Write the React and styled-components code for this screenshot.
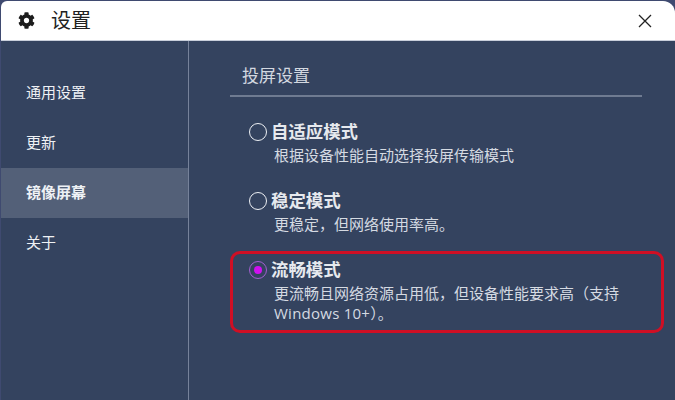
import React from "react";
import styled, { createGlobalStyle } from "styled-components";
import { FaCog } from "react-icons/fa";

const Global = createGlobalStyle`
  html, body { margin: 0; padding: 0; background: #34435f; }
  body { font-family: "Noto Sans CJK SC", "Noto Sans", sans-serif; }
`;
const Frame = styled.div`
  width: 675px; height: 400px; overflow: hidden; background: #3f4a70;
  padding: 1px 0 0 1px; box-sizing: border-box; display: flex; flex-direction: column;
`;
const TitleBar = styled.header`
  height: 40px; flex: none; background: #fff; display: flex; align-items: center;
  padding: 0 23px 0 17px; border-radius: 6px 12px 0 0; box-sizing: border-box;
  border-bottom: 1px solid #c9cfdb; color: #1c1c1c;
`;
const TitleText = styled.span`
  font-size: 20px; line-height: 26px; margin-left: 16px; flex: 1; color: #222;
  padding-bottom: 1px;
`;
const Close = styled.svg`width: 14px; height: 14px; flex: none;`;
const Body = styled.div`
  flex: 1; display: flex; background: #34435f; min-height: 0;
`;
const Sidebar = styled.nav`
  width: 188px; flex: none; box-sizing: border-box; padding-top: 27px;
  border-right: 1px solid #76829a; display: flex; flex-direction: column;
`;
const NavItem = styled.div`
  height: 50px; box-sizing: border-box; display: flex; align-items: center;
  padding: 0 0 3px 25px;
  font-size: 15px; color: #eef1f5;
  font-weight: ${p => (p.$active ? 700 : 400)};
  background: ${p => (p.$active ? "#536078" : "transparent")};
`;
const Main = styled.main`
  flex: 1; padding: 22px 0 0 41px; min-width: 0;
`;
const SectionHead = styled.div`
  width: 412px; box-sizing: border-box; padding: 0 0 8px 12px; margin-bottom: 16px;
  border-bottom: 2px solid #6f7b91; font-size: 17px; line-height: 24px; color: #d3d8e0;
`;
const Options = styled.div`
  display: flex; flex-direction: column; gap: 7px;
`;
const Option = styled.div`
  width: 434px; box-sizing: border-box; display: grid;
  grid-template-columns: 18px 1fr; column-gap: 4px;
  padding: 4px 10px 7px 16px;
  border: 3px solid ${p => (p.$marked ? "#cf0f24" : "transparent")};
  border-radius: 10px;
`;
const Radio = styled.span`
  width: 18px; height: 18px; box-sizing: border-box; border-radius: 50%; margin-top: 3px;
  border: 1.5px solid ${p => (p.$checked ? "#a25fd0" : "#eef1f5")};
  display: flex; align-items: center; justify-content: center;
  &::after {
    content: ""; width: 8px; height: 8px; border-radius: 50%;
    background: ${p => (p.$checked ? "#d010f0" : "transparent")};
  }
`;
const OptionTitle = styled.div`
  font-size: 17.4px; line-height: 24px; font-weight: 700; color: #e6e9ee;
  margin-top: -1px; margin-bottom: 2px;
`;
const OptionDesc = styled.div`
  grid-column: 2; font-size: 15px; line-height: 20px; color: #d5dae2; padding-left: 3px;
`;
const Latin = styled.span`
  font-family: "Open Sans", sans-serif; letter-spacing: 0.25px;
`;

const nav = ["通用设置", "更新", "镜像屏幕", "关于"];
const options = [
  { t: "自适应模式", d: "根据设备性能自动选择投屏传输模式" },
  { t: "稳定模式", d: "更稳定，但网络使用率高。" },
  { t: "流畅模式", d: <>更流畅且网络资源占用低，但设备性能要求高（支持<br /><Latin>Windows 10+</Latin>）。</>, on: true },
];

export default function App() {
  return (
    <Frame>
      <Global />
      <TitleBar>
        <FaCog size={17} color="#1c1c1c" />
        <TitleText>设置</TitleText>
        <Close viewBox="0 0 14 14">
          <path d="M1 1 L13 13 M13 1 L1 13" stroke="#222" strokeWidth="1.3" fill="none" />
        </Close>
      </TitleBar>
      <Body>
        <Sidebar>
          {nav.map(n => <NavItem key={n} $active={n === "镜像屏幕"}>{n}</NavItem>)}
        </Sidebar>
        <Main>
          <SectionHead>投屏设置</SectionHead>
          <Options>
            {options.map(o => (
              <Option key={o.t} $marked={o.on}>
                <Radio $checked={o.on} />
                <OptionTitle>{o.t}</OptionTitle>
                <OptionDesc>{o.d}</OptionDesc>
              </Option>
            ))}
          </Options>
        </Main>
      </Body>
    </Frame>
  );
}
